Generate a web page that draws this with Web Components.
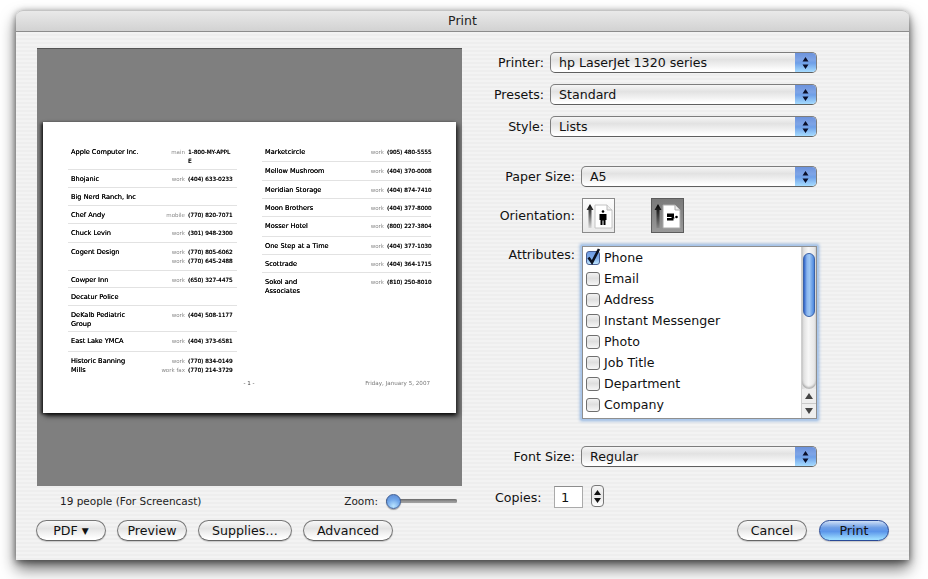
<!DOCTYPE html>
<html><head><meta charset="utf-8"><title>Print</title>
<style>
html,body{margin:0;padding:0;background:#fff;width:928px;height:579px;overflow:hidden}
body{font-family:"DejaVu Sans","Noto Sans",sans-serif;color:#111}
</style></head><body>
<print-window>
  <title-bar slot="title">Print</title-bar>
  <preview-pane slot="left">
    <paper-page></paper-page>
  </preview-pane>
  <status-row slot="left"></status-row>

  <form-row slot="right" lw="88" top="4"><span slot="label">Printer:</span><aqua-select>hp LaserJet 1320 series</aqua-select></form-row>
  <form-row slot="right" lw="88" top="11"><span slot="label">Presets:</span><aqua-select>Standard</aqua-select></form-row>
  <form-row slot="right" lw="88" top="11"><span slot="label">Style:</span><aqua-select>Lists</aqua-select></form-row>
  <form-row slot="right" lw="119" top="29"><span slot="label">Paper Size:</span><aqua-select>A5</aqua-select></form-row>
  <form-row slot="right" lw="119" top="11"><span slot="label">Orientation:</span><orient-buttons></orient-buttons></form-row>
  <form-row slot="right" lw="119" top="13" start><span slot="label">Attributes:</span><attr-list></attr-list></form-row>
  <form-row slot="right" lw="119" top="27"><span slot="label">Font Size:</span><aqua-select>Regular</aqua-select></form-row>
  <copies-row slot="right"></copies-row>

  <aqua-button slot="foot-left" w="70">PDF&nbsp;<span style="font-size:9px">▼</span></aqua-button>
  <aqua-button slot="foot-left" w="70">Preview</aqua-button>
  <aqua-button slot="foot-left" w="94">Supplies…</aqua-button>
  <aqua-button slot="foot-left" w="90">Advanced</aqua-button>
  <aqua-button slot="foot-right" w="70">Cancel</aqua-button>
  <aqua-button slot="foot-right" w="70" primary>Print</aqua-button>
</print-window>

<script>
function def(name, css, html, init){
  customElements.define(name, class extends HTMLElement{
    connectedCallback(){
      if(this.shadowRoot) return;
      const r=this.attachShadow({mode:'open'});
      r.innerHTML='<style>'+css+'</style>'+(typeof html==='function'?html(this):html);
      if(init) init(this,r);
    }
  });
}
const ARROWS='<svg width="9" height="14" viewBox="0 0 9 14"><path d="M4.500 1 7.500 5.500H1.500z M4.500 13 7.500 8.500H1.500z" fill="#0a0f2a"/></svg>';

def('print-window',`
:host{display:flex;flex-direction:column;box-sizing:border-box;width:893px;height:550px;margin:10px 0 0 16px;border-radius:7px 7px 0 0;
background:repeating-linear-gradient(#eeeeee 0 2px,#f3f3f3 2px 4px);box-shadow:0 9px 16px rgba(0,0,0,.55),0 2px 7px rgba(0,0,0,.5)}
.main{display:flex;height:488px}
.l{box-sizing:border-box;width:446px;padding:16px 0 0 21px;flex:none}
.r{flex:1;min-width:0;padding:16px 0 0 0;display:flex;flex-direction:column}
.foot{display:flex;justify-content:space-between;padding:0 20px;height:21px}
.fl,.fr{display:flex;gap:11px}
.fl{margin-right:auto}.fr{gap:12px}
`,`<slot name="title"></slot>
<div class="main"><div class="l"><slot name="left"></slot></div><div class="r"><slot name="right"></slot></div></div>
<div class="foot"><div class="fl"><slot name="foot-left"></slot></div><div class="fr"><slot name="foot-right"></slot></div></div>`);

def('title-bar',`
:host{display:block;box-sizing:border-box;height:22px;border-radius:7px 7px 0 0;text-align:center;font-size:12.5px;line-height:19px;color:#222;
background:linear-gradient(#e9e9e9,#d2d2d2);border-top:1px solid #c4c4c4;border-bottom:1px solid #8c8c8c}
`,`<slot></slot>`);

def('preview-pane',`
:host{display:flex;align-items:center;justify-content:center;box-sizing:border-box;width:425px;height:438px;background:#7f7f7f;border-top:1px solid #555}
`,`<slot></slot>`);

const C1=[["Apple Computer Inc.",[["main","1-800-MY-APPL\nE"]],23],["Bhojanic",[["work","(404) 633-0233"]],18],["Big Nerd Ranch, Inc",[],18],["Chef Andy",[["mobile","(770) 820-7071"]],18],["Chuck Levin",[["work","(301) 948-2300"]],19],["Cogent Design",[["work","(770) 805-6062"],["work","(770) 645-2488"]],28],["Cowper Inn",[["work","(650) 327-4475"]],17],["Decatur Police",[],18],["DeKalb Pediatric<br>Group",[["work","(404) 508-1177"]],26],["East Lake YMCA",[["work","(404) 373-6581"]],20],["Historic Banning<br>Mills",[["work","(770) 834-0149"],["work fax","(770) 214-3729"]],28]];
const C2=[["Marketcircle",[["work","(905) 480-5555"]],15],["Mellow Mushroom",[["work","(404) 370-0008"]],19],["Meridian Storage",[["work","(404) 874-7410"]],18],["Moon Brothers",[["work","(404) 377-8000"]],18],["Mosser Hotel",[["work","(800) 227-3804"]],20],["One Step at a Time",[["work","(404) 377-1030"]],18],["Scottrade",[["work","(404) 364-1715"]],18],["Sokol and<br>Associates",[["work","(810) 250-8010"]],26]];
function col(a,pr,pt){return '<div class="col">'+a.map((r,i)=>`<contact-row data-h="${r[2]}" data-pr="${pr}" data-pt="${pt}" data-e='${JSON.stringify(r[1])}' data-last="${i==a.length-1?1:0}" data-first="${i==0?1:0}">${r[0]}</contact-row>`).join('')+'</div>';}
def('paper-page',`
:host{display:flex;flex-direction:column;box-sizing:border-box;width:413px;height:291px;background:#fff;padding:25px 25px 26px 25px;
box-shadow:-2px 1px 3px rgba(0,0,0,.75),2px 3px 5px rgba(0,0,0,.8);font-family:"DejaVu Sans",sans-serif}
.cols{display:flex;gap:25px;flex:1;min-height:0;filter:blur(.25px)}
.col{width:169px}
.foot{display:flex;font-size:5.6px;line-height:8px;color:#777;filter:blur(.2px)}
.foot span{flex:1}.foot .c{text-align:center;color:#444}.foot .d{text-align:right;padding-right:1px}
`,()=>`<div class="cols">${col(C1,5,5)}${col(C2,0,5)}</div><div class="foot"><span></span><span class="c">- 1 -</span><span class="d">Friday, January 5, 2007</span></div>`);

def('contact-row',`
:host{display:flex;box-sizing:border-box;border-bottom:1px solid #e2e2e2;font-size:6.6px;line-height:9px;color:#000;padding:4px 0 0 3px;text-shadow:0 0 .5px #000}
.n{flex:none;width:78px;white-space:nowrap}
.p{flex:1;display:flex;flex-direction:column;align-items:flex-end}
.e{display:flex;justify-content:flex-end;width:100%}
.t{color:#888;flex:1;text-align:right;padding-right:3px;font-size:5.5px;text-shadow:none}
.v{width:44px;font-size:5.7px;white-space:pre;text-shadow:.3px 0 0 #000}
`,h=>{const e=JSON.parse(h.dataset.e);return `<div class="n"><slot></slot></div><div class="p" style="padding-right:${h.dataset.pr}px">${e.map(x=>`<div class="e"><span class="t">${x[0]}</span><span class="v">${x[1]}</span></div>`).join('')}</div>`},
h=>{h.style.height=h.dataset.h+'px';h.style.paddingTop=(h.dataset.first==1?1:h.dataset.pt)+'px';if(h.dataset.last==1)h.style.borderBottom='none';});

def('status-row',`
:host{display:flex;align-items:center;height:30px;font-size:10.5px;color:#222}
.c{margin-left:23px;flex:1}
.z{margin-right:8px}
.s{position:relative;width:71px;height:14px;margin-right:5px;display:flex;align-items:center}
.tr{width:100%;height:4px;border-radius:2px;background:linear-gradient(#6e6e6e,#b0b0b0);box-shadow:inset 0 0 1px #555}
.th{position:absolute;left:0;top:0;width:15px;height:15px;border-radius:50%;box-sizing:border-box;border:1px solid #3f5f95;background:radial-gradient(circle at 50% 85%,#b9e4ff 0,#6ea4e8 55%,#5a86cf 100%);box-shadow:0 1px 1px rgba(0,0,0,.35)}
`,`<span class="c">19 people (For Screencast)</span><span class="z">Zoom:</span><div class="s"><div class="tr"></div><div class="th"></div></div>`);

def('form-row',`
:host{display:flex;align-items:center;flex:none}
:host([start]){align-items:flex-start}
.lb{flex:none;box-sizing:border-box;padding-right:6px;text-align:right;font-size:12.6px;color:#111;white-space:nowrap}
:host([start]) .lb{padding-top:0;line-height:18px}
`,h=>`<div class="lb" style="width:${h.getAttribute('lw')}px"><slot name="label"></slot></div><slot></slot>`,
h=>{h.style.marginTop=h.getAttribute('top')+'px';});

def('aqua-select',`
:host{display:block;position:relative;box-sizing:border-box;height:21px;border:1px solid #7d7d7d;border-bottom-color:#5f5f5f;border-radius:5px;font-size:12.6px;line-height:19px;color:#111;padding-left:8px;overflow:hidden;
flex:1;margin-right:92px;background:linear-gradient(#f6f6f6 0,#e2e2e2 35%,#eeeeee 60%,#fff 92%)}
.b{position:absolute;right:0;top:-1px;bottom:-1px;width:21px;display:flex;align-items:center;justify-content:center;background:linear-gradient(#6d93dc 0,#7ea4e6 35%,#6e9fe8 50%,#a6dcff 95%);border-top:1px solid #24358f;box-sizing:border-box}
`,`<slot></slot><div class="b">${ARROWS}</div>`);

def('orient-buttons',`
:host{display:flex;gap:36px;flex:none;margin-left:1px}
.o{box-sizing:border-box;width:33px;height:35px;border:1px solid #8a8a8a;background:linear-gradient(#fdfdfd,#e9e9e9);display:block}
.o.on{background:linear-gradient(#7a7a7a,#989898);border-color:#5c5c5c}
svg{display:block}
`,`<div class="o"><svg width="31" height="33" viewBox="0 0 31 33"><defs><linearGradient id="a" x1="0" y1="0" x2="0" y2="1"><stop offset="0" stop-color="#000"/><stop offset="1" stop-color="#000" stop-opacity=".1"/></linearGradient></defs><path d="M7 5 10.500 11H8.500V29H5.500V11H3.500z" fill="url(#a)"/><path d="M12 6H24L29 11V29H12z" fill="#fff" stroke="#c4c4c4"/><path d="M24 6V11H29" fill="#eee" stroke="#bbb"/><circle cx="20" cy="12.500" r="1.300" fill="#000"/><path d="M16.500 15H23.500V21H22.500V26H20.500V21.500H19.500V26H17.500V21H16.500z" fill="#000"/></svg></div>
<div class="o on"><svg width="31" height="33" viewBox="0 0 31 33"><defs><linearGradient id="b" x1="0" y1="0" x2="0" y2="1"><stop offset="0" stop-color="#000"/><stop offset="1" stop-color="#000" stop-opacity=".1"/></linearGradient></defs><path d="M6 5 9.500 11H7.500V29H4.500V11H2.500z" fill="url(#b)"/><path d="M11 6H23L28 11V29H11z" fill="#fff" stroke="#aaa"/><path d="M23 6V11H28" fill="#eee" stroke="#aaa"/><circle cx="24.500" cy="18" r="1.300" fill="#000"/><path d="M15 14.500H22V18.500H22.500V19.500H21.500V21.500H15V19H19.500V18H15z" fill="#000"/></svg></div>`);

const ATTRS=["Phone","Email","Address","Instant Messenger","Photo","Job Title","Department","Company"];
def('attr-list',`
:host{display:flex;flex:none;box-sizing:border-box;width:235px;height:173px;margin-left:1px;background:#fff;border:1px solid #8f8f8f;box-shadow:0 0 0 1px #a9c6ea,0 0 3px 2px #8fb3df;position:relative}
.items{flex:1;display:flex;flex-direction:column}
`,()=>`<div class="items">${ATTRS.map((a,i)=>`<attr-check${i==0?' checked':''}>${a}</attr-check>`).join('')}</div><list-scroll></list-scroll>`);

def('attr-check',`
:host{display:flex;align-items:center;height:21px;font-size:12.6px;color:#111;padding-left:3px;gap:4px;flex:none}
.b{box-sizing:border-box;width:14px;height:14px;border:1px solid #6f6f6f;border-radius:3px;background:linear-gradient(#f2f2f2,#dfdfdf 45%,#f6f6f6);position:relative;flex:none}
:host([checked]) .b{background:linear-gradient(#6f9ce4,#7fabe9 50%,#bfe6ff);border-color:#4a5f92}
svg{position:absolute;left:-1px;top:-5px;display:none}
:host([checked]) svg{display:block}
`,`<div class="b"><svg width="16" height="18" viewBox="0 0 16 18"><path d="M2.500 10.500 6 15.500 13 2" fill="none" stroke="#0c1222" stroke-width="2.600"/></svg></div><slot></slot>`);

def('list-scroll',`
:host{display:flex;flex-direction:column;box-sizing:border-box;width:15px;flex:none;border-left:1px solid #cfcfcf;background:linear-gradient(90deg,#d8d8d8,#f7f7f7 45%,#e4e4e4);}
.tk{flex:1;position:relative;border-radius:0 0 7px 7px;box-shadow:inset 0 -2px 2px rgba(0,0,0,.25)}
.th{position:absolute;left:1px;right:1px;top:6px;height:64px;border-radius:6px;background:linear-gradient(90deg,#2f63c8,#8db7ef 30%,#9cc6f4 55%,#4b86de);border:1px solid #3a62a8;box-sizing:border-box}
.a{height:14px;display:flex;align-items:center;justify-content:center;flex:none;background:#eee}
.a.u{border-bottom:1px solid #c9c9c9}
`,`<div class="tk"><div class="th"></div></div><div class="a u"><svg width="8" height="6"><path d="M4 0 8 6H0z" fill="#444"/></svg></div><div class="a"><svg width="8" height="6"><path d="M4 6 8 0H0z" fill="#444"/></svg></div>`);

def('copies-row',`
:host{display:flex;align-items:center;flex:none;height:24px;margin-top:18px;font-size:12.6px;color:#111;padding-left:33px}
.l{width:59px}
.i{box-sizing:border-box;width:29px;height:22px;border:1px solid #aaa;border-top-color:#8d8d8d;background:#fff;font-size:13px;line-height:21px;padding-left:6px;color:#111}
.s{box-sizing:border-box;width:13px;height:22px;margin:-2px 0 0 8px;border:1px solid #777;border-radius:4px;display:flex;flex-direction:column;align-items:center;justify-content:center;gap:3px;background:linear-gradient(#f5f5f5,#e6e6e6 50%,#fff)}
svg{display:block}
`,`<span class="l">Copies:</span><div class="i">1</div><div class="s"><svg width="7" height="5"><path d="M3.500 0 7 5H0z" fill="#111"/></svg><svg width="7" height="5"><path d="M3.500 5 7 0H0z" fill="#111"/></svg></div>`);

def('aqua-button',`
:host{display:flex;align-items:center;justify-content:center;box-sizing:border-box;height:21px;border:1px solid #777;border-bottom-color:#666;border-radius:11px;font-size:12.6px;color:#111;flex:none;
background:linear-gradient(#f8f8f8 0,#e3e3e3 40%,#efefef 60%,#fff 92%);box-shadow:0 1px 1px rgba(0,0,0,.18)}
:host([primary]){border-color:#2a4a96;background:linear-gradient(#cfe0f6 0,#6f9fe6 35%,#5b95ea 55%,#9bdcff 95%)}
`,`<slot></slot>`,h=>{h.style.width=h.getAttribute('w')+'px'});
</script>
</body></html>
